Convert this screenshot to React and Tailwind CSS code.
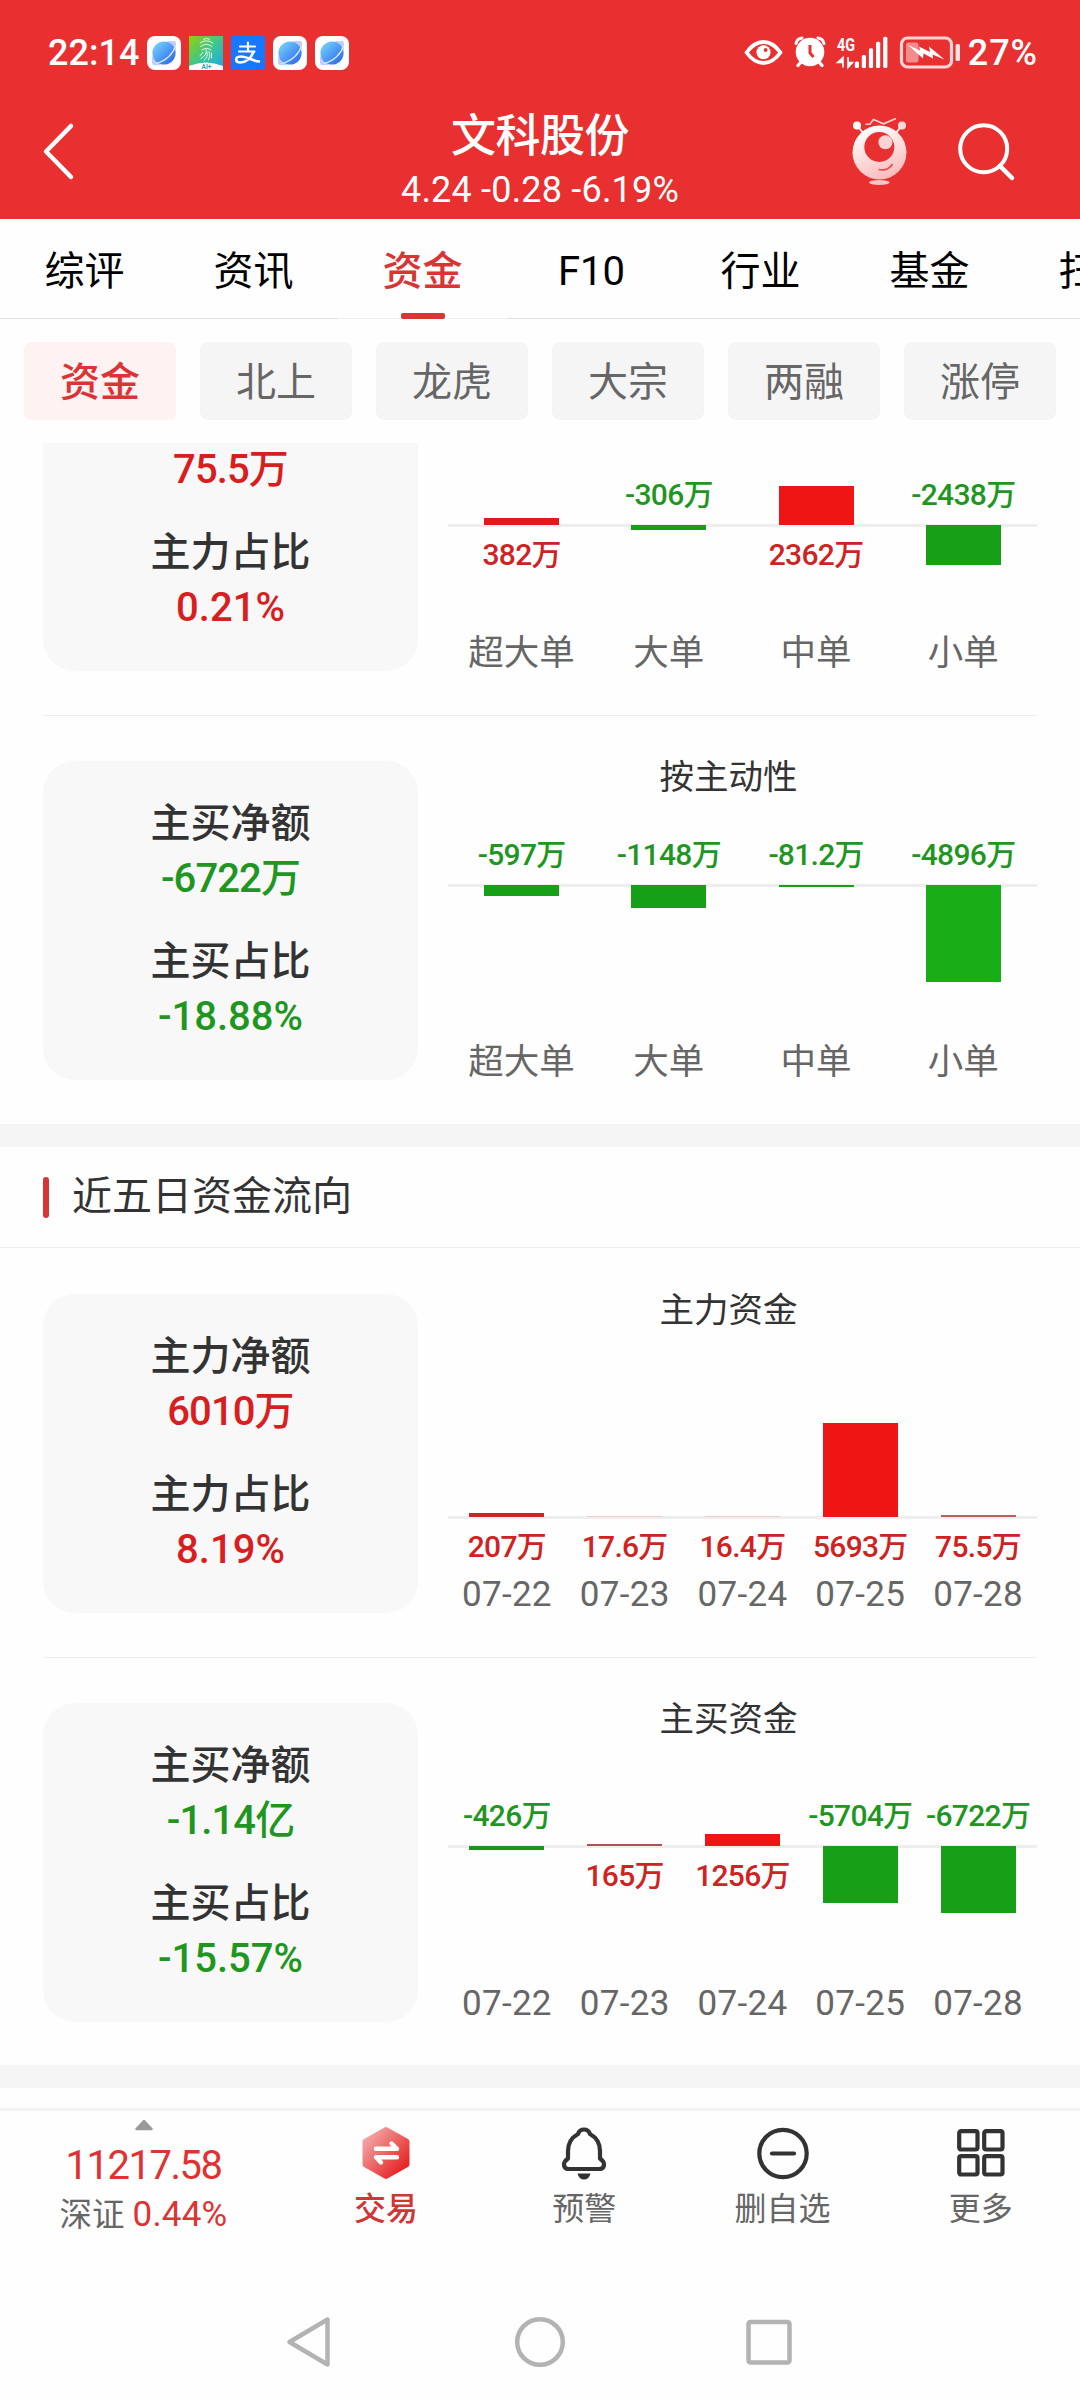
import React from 'react';

const TABS = ['综评', '资讯', '资金', 'F10', '行业', '基金', '扫雷'];
const PILLS = ['资金', '北上', '龙虎', '大宗', '两融', '涨停'];

const ORDER_ACTIVE = [
  { label: '超大单', value: '-597万', h: 11 },
  { label: '大单', value: '-1148万', h: 23 },
  { label: '中单', value: '-81.2万', h: 2 },
  { label: '小单', value: '-4896万', h: 97, color: 'bg-[#18ae18]' },
];

const ORDER_SIZE = [
  { label: '超大单', value: '382万', h: 7, color: 'bg-[#e61919]' },
  { label: '大单', value: '-306万', h: 5 },
  { label: '中单', value: '2362万', h: 39 },
  { label: '小单', value: '-2438万', h: 40 },
];

const MAIN_FLOW = [
  { label: '07-22', value: '207万', h: 4, color: 'bg-[#c62828]' },
  { label: '07-23', value: '17.6万', h: 1, color: 'bg-[#f0cccc]' },
  { label: '07-24', value: '16.4万', h: 1, color: 'bg-[#f0cccc]' },
  { label: '07-25', value: '5693万', h: 94 },
  { label: '07-28', value: '75.5万', h: 2, color: 'bg-[#b86060]' },
];

const BUY_FLOW = [
  { label: '07-22', value: '-426万', h: 4, color: 'bg-[#1f931f]' },
  { label: '07-23', value: '165万', h: 2, color: 'bg-[#b05050]' },
  { label: '07-24', value: '1256万', h: 12 },
  { label: '07-25', value: '-5704万', h: 57 },
  { label: '07-28', value: '-6722万', h: 67 },
];

const BrowserIcon = () => (
  <svg width="34" height="34" viewBox="0 0 34 34">
    <defs>
      <linearGradient id="planet" x1="0" y1="0" x2="1" y2="1">
        <stop offset="0" stopColor="#7fdcfb" />
        <stop offset="0.5" stopColor="#4f9df6" />
        <stop offset="1" stopColor="#2a5fe0" />
      </linearGradient>
    </defs>
    <rect width="34" height="34" rx="8" fill="#fff" />
    <path d="M20 5h7q2 0 2 2v7zM5 20v7q0 2 2 2h7z" fill="#c3cdf8" />
    <circle cx="17" cy="17" r="11.6" fill="url(#planet)" />
    <path d="M28.500 10C26 18 19 25 9 27.500" fill="none" stroke="#d5e6ff" strokeWidth="1.300" />
  </svg>
);

const FingerprintIcon = () => (
  <svg width="34" height="34" viewBox="0 0 34 34">
    <defs>
      <linearGradient id="finger" x1="0" y1="0" x2="1" y2="1">
        <stop offset="0" stopColor="#8fd400" />
        <stop offset="0.5" stopColor="#3fc58f" />
        <stop offset="1" stopColor="#12a9f2" />
      </linearGradient>
    </defs>
    <rect width="34" height="34" fill="url(#finger)" />
    <path d="M0 30Q17 23 34 30V34H0z" fill="#fff" />
    <g fill="none" stroke="#e2fbe8" strokeWidth="1" strokeLinecap="round">
      <path d="M14.500 3.200q3-1.600 6 0M11 7q6.500-4.500 13 0M11.500 10.500q6-4.500 11.500 0" />
      <path d="M13 14q4.500-3.500 9 0M17 13.500q2 5-5 9M18 16q1.500 5-3 8.500M20 15.500q2 4.500-.5 8.500M14 16.500q-1 2-3 3M22.500 17v5" />
    </g>
    <text x="17.500" y="33" textAnchor="middle" fontSize="6.500" fontWeight="700" fontFamily="Roboto" fill="#2aa6a0">AI+</text>
  </svg>
);

const AlipayIcon = () => (
  <svg width="34" height="34" viewBox="0 0 34 34">
    <rect width="34" height="34" rx="1.500" fill="#1677ff" />
    <g fill="none" stroke="#fff" strokeLinecap="round">
      <path d="M9 10.500H24M17 6.500V15M8 15.500H23.500" strokeWidth="2.200" />
      <path d="M22.500 16C20 22 15 26.500 9.500 26.500C4 26.500 3.500 21 9.500 20.500C15 20 22 25 28 25.500" strokeWidth="2.600" />
    </g>
  </svg>
);

const StatusIcons = () => (
  <svg width="222" height="38" viewBox="742 34 222 38">
    <path d="M746.500 52.500Q754 42 763.500 42T780.500 52.500Q773 63 763.500 63T746.500 52.500z" fill="none" stroke="#fff" strokeWidth="3.800" strokeLinejoin="round" />
    <circle cx="763.500" cy="52.300" r="7" fill="#fff" />
    <circle cx="765.600" cy="50" r="1.900" fill="#e83030" />

    <g stroke="#fff" strokeLinecap="round" fill="none">
      <path d="M796 43.500Q797 38.500 802 38M824 43.500Q823 38.500 818 38" strokeWidth="3" />
      <path d="M801 62L798 65.500M819 62L822 65.500" strokeWidth="3.400" />
    </g>
    <circle cx="810" cy="52" r="14.300" fill="#fff" />
    <path d="M810 45V53L813.500 57" fill="none" stroke="#e83030" strokeWidth="3" strokeLinejoin="round" />

    <text x="837" y="50.800" fontSize="19" fontWeight="700" fontFamily="Roboto" fill="#fff" textLength="18" lengthAdjust="spacingAndGlyphs">4G</text>
    <path d="M843 67.500V57.500L837.500 62.500H842M848 57V67.500L852.500 62.500H849" fill="#fff" stroke="#fff" strokeWidth="1.500" />
    <g fill="#fff">
      <rect x="854.800" y="61.500" width="4.200" height="6.500" rx="1.500" />
      <rect x="861.800" y="55" width="4.200" height="13" rx="1.500" />
      <rect x="868.900" y="48.300" width="4.200" height="19.700" rx="1.500" />
      <rect x="876" y="41.800" width="4.200" height="26.200" rx="1.500" />
      <rect x="883.200" y="36.800" width="4.200" height="31.200" rx="1.500" />
    </g>

    <rect x="901.500" y="38" width="50" height="29" rx="6" fill="none" stroke="#fbd5d5" strokeWidth="3.200" />
    <rect x="906" y="42.500" width="12.500" height="20" rx="2.500" fill="#f38c8c" />
    <path d="M908 45L920 50.500L919 46.500L930 52L929 46.500L944.500 59.500L932.500 54.500L933 58.500L923.500 53.500L923 58.500z" fill="#fff" />
    <rect x="955.600" y="44" width="4.400" height="17" rx="1.500" fill="#fbe3e3" />
  </svg>
);

const RobotIcon = () => (
  <svg width="58" height="72" viewBox="850 115 58 72">
    <defs>
      <linearGradient id="robot" x1="0.300" y1="0" x2="0.700" y2="1">
        <stop offset="0" stopColor="#fff" />
        <stop offset="1" stopColor="#fbb9b9" />
      </linearGradient>
    </defs>
    <path d="M857 125.500L864 134M902 125.500L895 134" stroke="#fff" strokeWidth="1.800" />
    <circle cx="857" cy="125.400" r="4" fill="#fff" />
    <circle cx="902" cy="125.400" r="4" fill="#fcd9d9" />
    <path d="M865.400 124.300L870 124L873.500 119.500L883.500 123.800L896 118.500" fill="none" stroke="#fcd5d5" strokeWidth="1.600" />
    <circle cx="879.500" cy="152.500" r="27" fill="url(#robot)" />
    <circle cx="879.300" cy="147" r="15" fill="#e83030" />
    <circle cx="885.400" cy="142.300" r="7" fill="#fbd3d3" />
    <path d="M878.500 169.500Q888 171.500 892.500 164" fill="none" stroke="#e05050" strokeWidth="1.700" />
    <ellipse cx="879.300" cy="182.500" rx="10.300" ry="2.400" fill="#fbc5c5" />
  </svg>
);

const TradeIcon = () => (
  <svg width="50" height="54" viewBox="0 0 50 54">
    <defs>
      <linearGradient id="hex" x1="0" y1="0" x2="1" y2="1">
        <stop offset="0.100" stopColor="#f3a3a3" />
        <stop offset="0.850" stopColor="#e62a2a" />
      </linearGradient>
    </defs>
    <path d="M25 4L45.500 15.500V38.500L25 50L4.500 38.500V15.500z" fill="url(#hex)" stroke="url(#hex)" strokeWidth="6" strokeLinejoin="round" />
    <path d="M15 22.800H36L30.500 17.500M36 31.300H15L20 36.500" fill="none" stroke="#fff" strokeWidth="4.400" strokeLinecap="round" strokeLinejoin="round" />
  </svg>
);

const BellIcon = () => (
  <svg width="50" height="54" viewBox="0 0 50 54">
    <path
      d="M25 3.500Q20.500 3.500 19 8Q9 13.500 9 25V32.500Q5 35.500 5 38.500Q5 43 9.500 43H40.500Q45 43 45 38.500Q45 35.500 41 32.500V25Q41 13.500 31 8Q29.500 3.500 25 3.500z"
      fill="none"
      stroke="#333"
      strokeWidth="4.200"
      strokeLinejoin="round"
    />
    <path d="M18.500 47.500H31.500Q30 53.500 25 53.500T18.500 47.500z" fill="#333" />
  </svg>
);

const RemoveIcon = () => (
  <svg width="54" height="54" viewBox="0 0 54 54" fill="none" stroke="#333" strokeWidth="4.200" strokeLinecap="round">
    <circle cx="27" cy="27.500" r="23.700" />
    <path d="M16 27.500H38" />
  </svg>
);

const MoreIcon = () => (
  <svg width="50" height="54" viewBox="0 0 50 54" fill="none" stroke="#333" strokeWidth="4.200">
    <rect x="3.200" y="5.200" width="18.300" height="18.300" rx="2" />
    <rect x="28.200" y="5.200" width="18.300" height="18.300" rx="2" />
    <rect x="3.200" y="30.200" width="18.300" height="18.300" rx="2" />
    <rect x="28.200" y="30.200" width="18.300" height="18.300" rx="2" />
  </svg>
);

const SummaryCard = ({ items, tone }) => (
  <div className="w-[375px] h-[319px] shrink-0 rounded-[32px] bg-[#f8f8f8] pt-[35px] flex flex-col items-center gap-[29px]">
    {items.map(([label, value]) => (
      <div key={value} className="text-center text-[40px] font-medium">
        <div className="h-14 leading-[56px] text-[#333]">{label}</div>
        <div
          className={`leading-[53px] ${value.includes('%') ? 'tracking-normal' : 'tracking-[-0.900px]'} ${
            tone === 'up' ? 'text-[#d81e1e]' : 'text-[#1f961f]'
          }`}
        >
          {value}
        </div>
      </div>
    ))}
  </div>
);

// axis = distance from the top of the row to the zero line
const BarChart = ({ title, data, axis }) => (
  <div className="relative w-[589px] h-[319px] flex flex-col">
    <div className="h-8 mb-[-32px] pr-7 text-center text-[34.500px] leading-8 text-[#333]">{title}</div>
    <div className="absolute inset-x-0 h-[3px] bg-[#eee]" style={{ top: axis - 1 }} />
    <div className="relative flex grow">
      {data.map((d) => {
        const down = d.value.startsWith('-');
        const bar = (
          <div
            className={`w-[75px] ${d.color || (down ? 'bg-[#179f17]' : 'bg-[#f01515]')}`}
            style={{ height: d.h }}
          />
        );
        const text = (
          <div
            className={`h-[60px] leading-[60px] text-[30px] font-medium tracking-[-0.700px] whitespace-nowrap ${
              down ? 'text-[#1f961f]' : 'text-[#cf2222]'
            }`}
          >
            {d.value}
          </div>
        );
        return (
          <div key={d.label} className="flex-1 basis-0 min-w-0 flex flex-col items-center">
            <div className="shrink-0 flex flex-col justify-end" style={{ height: axis }}>
              {down ? text : bar}
            </div>
            <div className="grow flex flex-col">{down ? bar : text}</div>
            <div className="h-0 flex items-end text-[#666]">
              <div className={`leading-9 whitespace-nowrap ${d.label.includes('-') ? 'text-[35px] tracking-[0.300px]' : 'text-[35.500px]'}`}>
                {d.label}
              </div>
            </div>
          </div>
        );
      })}
    </div>
  </div>
);

const FlowRow = ({ items, tone, ...chart }) => (
  <div className="flex justify-between px-[43px]">
    <SummaryCard items={items} tone={tone} />
    <BarChart {...chart} />
  </div>
);

const Divider = () => <div className="h-px ml-[43px] mr-[43px] mt-11 mb-[45px] bg-[#ededed]" />;

const FooterItem = ({ icon, label, active }) => (
  <div className="flex-1 flex flex-col items-center pt-[15px]">
    {icon}
    <div className={`mt-1.5 leading-[46px] text-[32px] ${active ? 'text-[#d03636] font-medium' : 'text-[#666]'}`}>{label}</div>
  </div>
);

export default function App() {
  return (
    <div className="w-[1080px] h-[2400px] overflow-hidden bg-[#fefefe] flex flex-col font-['Roboto','Noto_Sans_CJK_SC',sans-serif]">
      <header className="h-[219px] shrink-0 bg-[#e83030] text-white flex flex-col">
        <div className="h-[106px] flex items-center justify-between pl-12 pr-[42px]">
          <div className="flex items-center gap-2">
            <span className="w-[91px] text-[36px] font-medium leading-none">22:14</span>
            <BrowserIcon />
            <FingerprintIcon />
            <AlipayIcon />
            <BrowserIcon />
            <BrowserIcon />
          </div>
          <div className="flex items-center gap-1">
            <StatusIcons />
            <span className="text-[36px] font-medium leading-none tracking-[0.900px]">27%</span>
          </div>
        </div>
        <div className="h-[113px] flex justify-between">
          <svg width="300" height="92" viewBox="0 0 300 92" className="shrink-0">
            <path d="M71 20L46 45.500L71 71" fill="none" stroke="#fff" strokeWidth="4.500" strokeLinecap="round" strokeLinejoin="round" />
          </svg>
          <div className="flex flex-col items-center pt-px">
            <div className="text-[45px] font-medium leading-[60px] tracking-[-0.500px]">文科股份</div>
            <div className="text-[36px] leading-[47px] whitespace-pre tracking-[0.200px]">4.24 -0.28 -6.19%</div>
          </div>
          <div className="w-[300px] flex items-start justify-end gap-12 pt-[9px] pr-16">
            <RobotIcon />
            <svg width="60" height="66" viewBox="956 120 60 66" className="mt-[5px]" fill="none" stroke="#fff" strokeWidth="4" strokeLinecap="round">
              <circle cx="983.700" cy="148.700" r="23.500" />
              <path d="M1000 166L1012 178" strokeWidth="4.500" />
            </svg>
          </div>
        </div>
      </header>

      <nav className="h-[100px] shrink-0 flex overflow-hidden text-[40px] text-black">
        {TABS.map((tab, i) => (
          <div
            key={tab}
            className={`w-[169px] shrink-0 h-full border-b flex flex-col items-center ${
              i === 2 ? 'border-[#f0f0f0] text-[#d93535] font-medium' : 'border-[#dedede]'
            }`}
          >
            <div className="leading-[105px] h-[94px]">{tab}</div>
            {i === 2 && <div className="w-11 h-1.5 shrink-0 rounded-[2px] bg-[#d93535]" />}
          </div>
        ))}
      </nav>

      <div className="h-[124px] shrink-0 px-6 pt-[23px] flex justify-between">
        {PILLS.map((pill, i) => (
          <div
            key={pill}
            className={`w-[152px] h-[78px] rounded-lg text-center text-[40px] leading-[82px] ${
              i === 0 ? 'bg-[#fff2f2] text-[#d93535] font-medium' : 'bg-[#f5f5f5] text-[#666]'
            }`}
          >
            {pill}
          </div>
        ))}
      </div>

      <main className="h-[1665px] shrink-0 overflow-hidden">
        <div className="-mt-[91px]">
          <FlowRow items={[['', '75.5万'], ['主力占比', '0.21%']]} tone="up" data={ORDER_SIZE} axis={173} />
          <Divider />
          <FlowRow items={[['主买净额', '-6722万'], ['主买占比', '-18.88%']]} tone="down" title="按主动性" data={ORDER_ACTIVE} axis={124} />
        </div>
        <div className="mt-11 h-[23px] bg-[#f5f5f5]" />

        <div className="h-[101px] border-b border-[#ededed] pl-[43px] flex items-center gap-[23px]">
          <div className="w-1.5 h-[41px] rounded-full bg-[#d93535]" />
          <h2 className="text-[40px] leading-none text-[#333]">近五日资金流向</h2>
        </div>
        <div className="pt-[46px]">
          <FlowRow items={[['主力净额', '6010万'], ['主力占比', '8.19%']]} tone="up" title="主力资金" data={MAIN_FLOW} axis={223} />
          <Divider />
          <FlowRow items={[['主买净额', '-1.14亿'], ['主买占比', '-15.57%']]} tone="down" title="主买资金" data={BUY_FLOW} axis={143} />
        </div>
        <div className="mt-[43px] h-[23px] bg-[#f5f5f5]" />
      </main>

      <footer className="h-[152px] shrink-0 border-t-[3px] border-[#f3f3f3] flex">
        <div className="w-[287px] flex flex-col items-center pt-2">
          <svg width="20" height="12" viewBox="0 0 20 12">
            <path d="M10 2L17.500 10H2.500z" fill="#999" stroke="#999" strokeWidth="2.500" strokeLinejoin="round" />
          </svg>
          <div className="mt-[9px] text-[40px] leading-[52px] tracking-[-1.500px] text-[#e03232]">11217.58</div>
          <div className="text-[35px] leading-[46px] text-[#e03232] flex gap-2">
            <span className="text-[32.500px] text-[#666]">深证</span>
            <span className="tracking-[0.200px]">0.44%</span>
          </div>
        </div>
        <FooterItem icon={<TradeIcon />} label="交易" active />
        <FooterItem icon={<BellIcon />} label="预警" />
        <FooterItem icon={<RemoveIcon />} label="删自选" />
        <FooterItem icon={<MoreIcon />} label="更多" />
      </footer>

      <div className="grow flex items-center justify-center pt-[23px]">
        <svg width="520" height="60" viewBox="280 2312 520 60" fill="none" stroke="#b3b3b3" strokeWidth="4.500" strokeLinejoin="round">
          <path d="M289.500 2342L327.500 2319.500V2364.500z" />
          <circle cx="540" cy="2342" r="22.800" />
          <rect x="748.500" y="2322" width="41" height="40.500" rx="2" />
        </svg>
      </div>
    </div>
  );
}
